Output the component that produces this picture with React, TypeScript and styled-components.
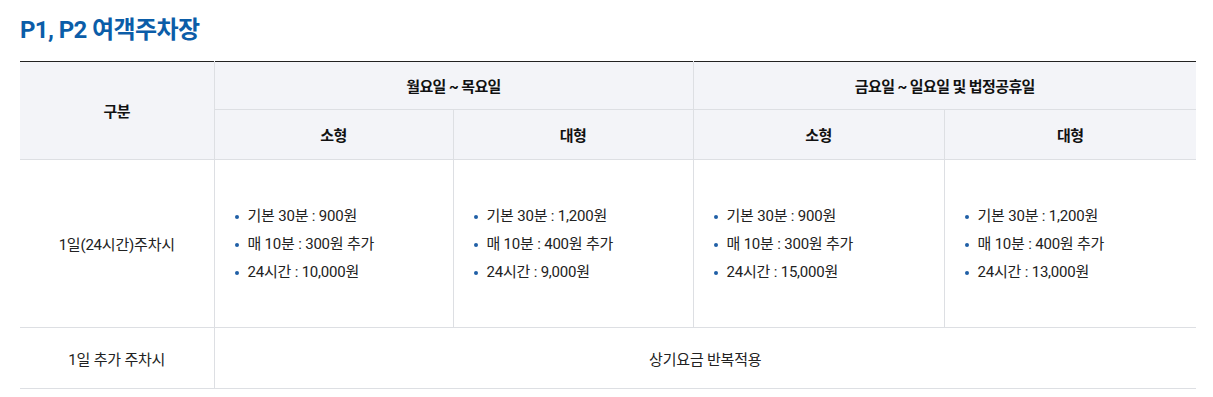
import styled, { createGlobalStyle } from "styled-components";

const GlobalStyle = createGlobalStyle`
  body {
    margin: 0;
    background: #fff;
    font-family: Roboto, "Noto Sans CJK KR", sans-serif;
    color: #222;
  }
`;

const Wrap = styled.div`
  padding: 15px 17px 0 20px;
`;

const Title = styled.h3`
  margin: 0 0 15px;
  font-size: 24px;
  font-weight: 700;
  line-height: 31px;
  letter-spacing: -0.6px;
  color: #0b5da8;
`;

const Table = styled.table`
  width: 1176px;
  border-collapse: collapse;
  table-layout: fixed;
  border-top: 1px solid #222;
  font-size: 15px;
  letter-spacing: -0.2px;
`;

const Th = styled.th<{ $h: number }>`
  height: ${(p) => p.$h}px;
  padding: 0;
  background: #f3f4f8;
  border: 1px solid #dddfe3;
  border-top: none;
  font-weight: 700;
  font-size: 15px;
  letter-spacing: -0.6px;
  text-align: center;
  color: #111;
  &:first-child {
    border-left: none;
  }
  &:last-child {
    border-right: none;
  }
`;

const Td = styled.td<{ $h: number; $list?: boolean }>`
  height: ${(p) => p.$h}px;
  padding: ${(p) => (p.$list ? "0 0 0 20px" : "0")};
  border: 1px solid #dddfe3;
  text-align: ${(p) => (p.$list ? "left" : "center")};
  vertical-align: middle;
  &:first-child {
    border-left: none;
  }
  &:last-child {
    border-right: none;
  }
`;

const List = styled.ul`
  margin: 0;
  padding: 0;
  list-style: none;
`;

const Item = styled.li`
  position: relative;
  padding-left: 13px;
  line-height: 28px;
  &::before {
    content: "";
    position: absolute;
    left: 0;
    top: 13px;
    width: 4px;
    height: 4px;
    border-radius: 50%;
    background: #1f5fa6;
  }
`;

const prices = [
  ["기본 30분 : 900원", "매 10분 : 300원 추가", "24시간 : 10,000원"],
  ["기본 30분 : 1,200원", "매 10분 : 400원 추가", "24시간 : 9,000원"],
  ["기본 30분 : 900원", "매 10분 : 300원 추가", "24시간 : 15,000원"],
  ["기본 30분 : 1,200원", "매 10분 : 400원 추가", "24시간 : 13,000원"],
];

export default function App() {
  return (
    <Wrap>
      <GlobalStyle />
      <Title>P1, P2 여객주차장</Title>
      <Table>
        <colgroup>
          <col style={{ width: 194 }} />
          <col style={{ width: 239 }} />
          <col style={{ width: 240 }} />
          <col style={{ width: 251 }} />
          <col style={{ width: 252 }} />
        </colgroup>
        <thead>
          <tr>
            <Th $h={47} rowSpan={2}>
              구분
            </Th>
            <Th $h={47} colSpan={2}>
              월요일 ~ 목요일
            </Th>
            <Th $h={47} colSpan={2}>
              금요일 ~ 일요일 및 법정공휴일
            </Th>
          </tr>
          <tr>
            <Th $h={49}>소형</Th>
            <Th $h={49}>대형</Th>
            <Th $h={49}>소형</Th>
            <Th $h={49}>대형</Th>
          </tr>
        </thead>
        <tbody>
          <tr>
            <Td $h={167}>1일(24시간)주차시</Td>
            {prices.map((lines, i) => (
              <Td key={i} $h={167} $list>
                <List>
                  {lines.map((t) => (
                    <Item key={t}>{t}</Item>
                  ))}
                </List>
              </Td>
            ))}
          </tr>
          <tr>
            <Td $h={60}>1일 추가 주차시</Td>
            <Td $h={60} colSpan={4}>
              상기요금 반복적용
            </Td>
          </tr>
        </tbody>
      </Table>
    </Wrap>
  );
}
